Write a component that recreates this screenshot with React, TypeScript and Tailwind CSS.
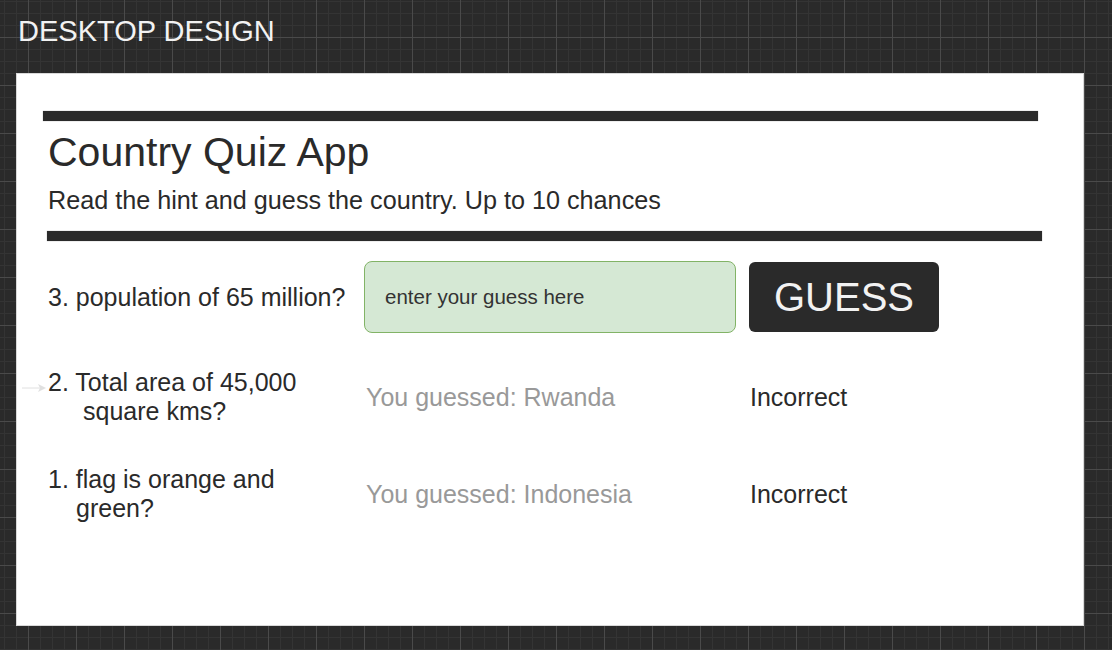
import { useState } from 'react'

const rows = [
  { q: ['2. Total area of 45,000', 'square kms?'], indent: 'pl-[35px]', guess: 'Rwanda', gap: 'mt-[35px]' },
  { q: ['1. flag is orange and', 'green?'], indent: 'pl-[28px]', guess: 'Indonesia', gap: 'mt-[39px]' },
]

export default function App() {
  const [guess, setGuess] = useState('')

  return (
    <div className="relative w-[1112px] h-[650px] overflow-hidden bg-[#2a2a2a] bg-[image:linear-gradient(to_right,#4a4a4a_1px,transparent_1px),linear-gradient(to_bottom,#4a4a4a_1px,transparent_1px),linear-gradient(to_right,#343434_1px,transparent_1px),linear-gradient(to_bottom,#343434_1px,transparent_1px)] bg-[size:48px_48px,48px_48px,12px_12px,12px_12px] bg-[position:28px_37px,28px_37px,4px_1px,4px_1px] font-['Liberation_Sans',Arial,sans-serif]">
      <div className="h-[73px] pl-[18px] pt-[17px] text-[29px] leading-[29px] text-[#f2f2f2]">DESKTOP DESIGN</div>

      <div className="ml-[16px] w-[1068px] h-[553px] bg-white border border-[#d9d9d9] pt-[37px] text-[#2a2a2a]">
        <div className="ml-[26px] w-[995px] h-[10px] bg-[#2a2a2a] shadow-[0_0_1px_#999]" />
        <h1 className="mt-[11px] ml-[31px] text-[41px] leading-none">Country Quiz App</h1>
        <p className="mt-[15px] ml-[31px] text-[25.2px] leading-none">Read the hint and guess the country. Up to 10 chances</p>
        <div className="mt-[18px] ml-[30px] w-[995px] h-[10px] bg-[#2a2a2a] shadow-[0_0_1px_#999]" />

        <div className="ml-[31px] mt-[20px] flex items-center h-[72px]">
          <div className="w-[316px] text-[25px] leading-[29px]">3. population of 65 million?</div>
          <input
            value={guess}
            onChange={(e) => setGuess(e.target.value)}
            placeholder="enter your guess here"
            className="w-[372px] h-[72px] rounded-[8px] border border-[#82b366] bg-[#d5e8d4] pl-[20px] text-[20.5px] text-[#333] placeholder:text-[#333] outline-none"
          />
          <button className="ml-[13px] w-[190px] h-[70px] rounded-[6px] bg-[#2a2a2a] text-[40px] leading-none text-[#f2f2f2]">
            GUESS
          </button>
        </div>

        {rows.map((r) => (
          <div key={r.guess} className={`ml-[31px] ${r.gap} flex items-center h-[58px] text-[25px] leading-[29px]`}>
            <div className="w-[318px]">
              <div>{r.q[0]}</div>
              <div className={r.indent}>{r.q[1]}</div>
            </div>
            <div className="w-[384px] text-[#999]">You guessed: {r.guess}</div>
            <div>Incorrect</div>
          </div>
        ))}
      </div>

      <svg className="absolute left-[20px] top-[382px]" width="28" height="12" viewBox="0 0 28 12">
        <line x1="2" y1="6" x2="20" y2="6" stroke="#e0e0e0" strokeWidth="1" />
        <path d="M18 2 L26 6 L18 10 L20 6 Z" fill="#e0e0e0" />
      </svg>
    </div>
  )
}
